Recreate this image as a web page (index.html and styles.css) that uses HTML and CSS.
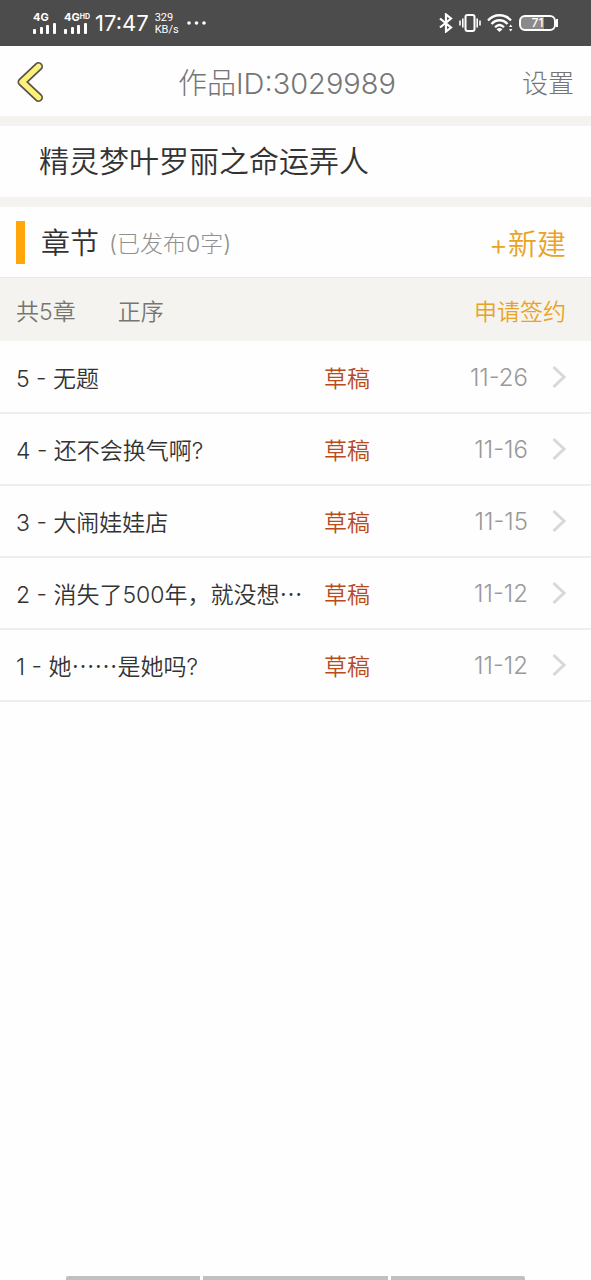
FILE: index.html
```html
<!DOCTYPE html>
<html lang="zh-CN">
<head>
<meta charset="utf-8">
<meta name="viewport" content="width=device-width, initial-scale=1">
<title>作品ID:3029989</title>
<link rel="stylesheet" href="styles.css">
</head>
<body>
<div class="status">
  <div class="status-left">
    <div class="signal"><span class="net">4G</span>
      <svg width="24" height="12" viewBox="0 0 24 12" fill="#fff"><rect x="0" y="7" width="3" height="5" rx="1"/><rect x="7" y="5" width="3" height="7" rx="1"/><rect x="13" y="3" width="3" height="9" rx="1"/><rect x="20" y="1" width="3" height="11" rx="1"/></svg>
    </div>
    <div class="signal"><span class="net">4G<span class="hd">HD</span></span>
      <svg width="24" height="12" viewBox="0 0 24 12" fill="#fff"><rect x="0" y="7" width="3" height="5" rx="1"/><rect x="7" y="5" width="3" height="7" rx="1"/><rect x="13" y="3" width="3" height="9" rx="1"/><rect x="20" y="1" width="3" height="11" rx="1"/></svg>
    </div>
    <span class="clock">17:47</span>
    <div class="speed"><span>329</span><span>KB/s</span></div>
    <svg class="dots" width="20" height="4" viewBox="0 0 20 4" fill="#fff"><circle cx="2" cy="2" r="1.8"/><circle cx="9.500" cy="2" r="1.800"/><circle cx="17" cy="2" r="1.800"/></svg>
  </div>
  <div class="status-right">
    <svg width="14" height="20" viewBox="0 0 14 20" fill="none" stroke="#fff" stroke-width="2.200"><path d="M1 5.500L12 14.500L7 18.500V1.500L12 5.500L1 14.500"/></svg>
    <svg width="22" height="20" viewBox="0 0 22 20" fill="none" stroke="#fff" stroke-width="2"><rect x="6.500" y="2" width="9" height="16" rx="2"/><path d="M3.800 5.500v9M18.200 5.500v9M1 7.500v5M21 7.500v5" stroke-width="1.600"/></svg>
    <svg width="26" height="20" viewBox="0 0 26 20" fill="none" stroke="#fff" stroke-width="2.300"><path d="M1 7.500C7 .5 18 .5 24 7.500M4.500 11C9 6 16 6 20.500 11M8 14.300C11 11.200 14 11.200 17 14.300"/><path d="M9.500 16.200Q12.500 14 15.500 16.200L12.500 19z" fill="#fff" stroke="none"/><path d="M22 14l1.700-2.500L25.400 14zM22 16l1.700 2.500L25.400 16z" fill="#fff" stroke="none"/></svg>
    <div class="battery"><div class="cell">71</div><div class="nub"></div></div>
  </div>
</div>

<header class="header">
  <button class="back" aria-label="返回">
    <svg width="27" height="42" viewBox="0 0 27 42" fill="none" stroke-linecap="round" stroke-linejoin="round"><path d="M21.500 5.500L5 21L21.500 36.500" stroke="#55524a" stroke-width="9"/><path d="M21.500 5.500L5 21L21.500 36.500" stroke="#fdf07a" stroke-width="5.500"/></svg>
  </button>
  <h1 class="page-title">作品ID:3029989</h1>
  <button class="settings">设置</button>
</header>

<h2 class="work-name">精灵梦叶罗丽之命运弄人</h2>

<section>
  <div class="section-head">
    <h2 class="section-title">章节</h2>
    <span class="word-count">(已发布0字)</span>
    <button class="create">+新建</button>
  </div>
  <div class="toolbar">
    <span>共5章</span>
    <button class="order">正序</button>
    <a class="apply" href="#">申请签约</a>
  </div>
  <ul class="chapters">
    <li><a class="chapter" href="#"><span class="name">5 - 无题</span><span class="state">草稿</span><time class="date">11-26</time><svg class="arrow" width="14" height="24" viewBox="0 0 14 24"><path d="M1.500 2L12 12L1.500 22"/></svg></a></li>
    <li><a class="chapter" href="#"><span class="name">4 - 还不会换气啊?</span><span class="state">草稿</span><time class="date">11-16</time><svg class="arrow" width="14" height="24" viewBox="0 0 14 24"><path d="M1.500 2L12 12L1.500 22"/></svg></a></li>
    <li><a class="chapter" href="#"><span class="name">3 - 大闹娃娃店</span><span class="state">草稿</span><time class="date">11-15</time><svg class="arrow" width="14" height="24" viewBox="0 0 14 24"><path d="M1.500 2L12 12L1.500 22"/></svg></a></li>
    <li><a class="chapter" href="#"><span class="name">2 - 消失了500年，就没想<span class="cjk">…</span></span><span class="state">草稿</span><time class="date">11-12</time><svg class="arrow" width="14" height="24" viewBox="0 0 14 24"><path d="M1.500 2L12 12L1.500 22"/></svg></a></li>
    <li><a class="chapter" href="#"><span class="name">1 - 她<span class="cjk">……</span>是她吗?</span><span class="state">草稿</span><time class="date">11-12</time><svg class="arrow" width="14" height="24" viewBox="0 0 14 24"><path d="M1.500 2L12 12L1.500 22"/></svg></a></li>
  </ul>
</section>

<div class="nav-hints"><i></i><i class="home"></i><i></i></div>
</body>
</html>
```
FILE: styles.css
```css
* { box-sizing: border-box; }

body {
  margin: 0;
  min-height: 100vh;
  display: flex;
  flex-direction: column;
  background: #fefefe;
  color: #333;
  font-family: Inter, "Noto Sans CJK SC", sans-serif;
  font-weight: 350;
  font-size: 23px;
}

button {
  padding: 0;
  border: 0;
  background: none;
  font: inherit;
  color: inherit;
}

a { color: inherit; text-decoration: none; }
h1, h2 { margin: 0; font-weight: 350; }
svg { display: block; flex: none; }

.status {
  height: 46px;
  padding: 0 33px;
  display: flex;
  align-items: center;
  justify-content: space-between;
  background: #4c4c4c;
  color: #fff;
}
.status-left, .status-right { display: flex; align-items: center; }
.status-left { gap: 6px; }
.status-right { gap: 6px; }
.signal { width: 25px; white-space: nowrap; }
.net { display: flex; font-size: 11px; line-height: 9px; font-weight: 700; }
.hd { font-size: 7px; line-height: 7px; }
.clock { font-size: 22px; line-height: 26px; font-weight: 400; }
.speed {
  display: flex;
  flex-direction: column;
  gap: 1px;
  font-family: Roboto, sans-serif;
  font-size: 11px;
  line-height: 11px;
  font-weight: 400;
}
.dots { margin-left: 2px; }

.battery { display: flex; align-items: center; }
.cell {
  width: 37px;
  height: 16px;
  border: 2px solid #fff;
  border-radius: 6px;
  background: linear-gradient(90deg, #8a8a8a 71%, #4c4c4c 71%);
  font-size: 12px;
  line-height: 12px;
  font-weight: 500;
  text-align: center;
}
.nub { width: 2px; height: 8px; background: #fff; }

.header {
  height: 80px;
  padding: 0 17px;
  display: flex;
  align-items: center;
  justify-content: space-between;
  border-bottom: 10px solid #f4f3ef;
  color: #757575;
}
.back { padding-top: 2px; }
.page-title { padding: 5px 0 0 8px; font-size: 29px; line-height: 40px; font-weight: 300; }
.settings { padding-top: 5px; font-size: 26px; line-height: 40px; font-weight: 300; }

.work-name {
  padding: 13px 39px;
  border-bottom: 10px solid #f4f3ef;
  font-size: 30px;
  line-height: 45px;
}

.section-head {
  height: 71px;
  padding: 0 25px 0 16px;
  display: flex;
  align-items: center;
  border-bottom: 1px solid #e9e9e7;
}
.section-title {
  padding: 3px 0 0 16px;
  border-left: 9px solid #ffa60a;
  font-size: 29px;
  line-height: 40px;
}
.word-count { margin-left: 10px; font-size: 23px; font-weight: 300; color: #909090; }
.create { margin-left: auto; font-size: 29px; color: #e9a324; }

.toolbar {
  height: 63px;
  padding: 0 25px 0 16px;
  display: flex;
  align-items: center;
  gap: 42px;
  background: #f4f3ef;
  color: #777570;
}
.apply { margin-left: auto; color: #e9a324; }

.chapters { margin: 0; padding: 1px 0 0; list-style: none; }
.chapter {
  height: 72px;
  padding: 0 25px 0 16px;
  display: grid;
  grid-template-columns: 56% 1fr auto 14px;
  align-items: center;
  border-bottom: 2px solid #eee;
}
.name { white-space: nowrap; }
.cjk { font-family: "Noto Sans CJK SC", sans-serif; }
.state { color: #b84a1c; }
.date { color: #999; margin-right: 24px; font-size: 24px; }
.arrow { fill: none; stroke: #d8d8d8; stroke-width: 3px; }

.nav-hints {
  margin-top: auto;
  padding: 0 66px;
  display: grid;
  grid-template-columns: 134fr 185fr 134fr;
  gap: 3px;
}
.nav-hints i { height: 4px; background: #c0c0c0; border-radius: 2px 0 0 0; }
.nav-hints .home { border-radius: 0; }
.nav-hints i:last-child { border-radius: 0 2px 0 0; }
```
